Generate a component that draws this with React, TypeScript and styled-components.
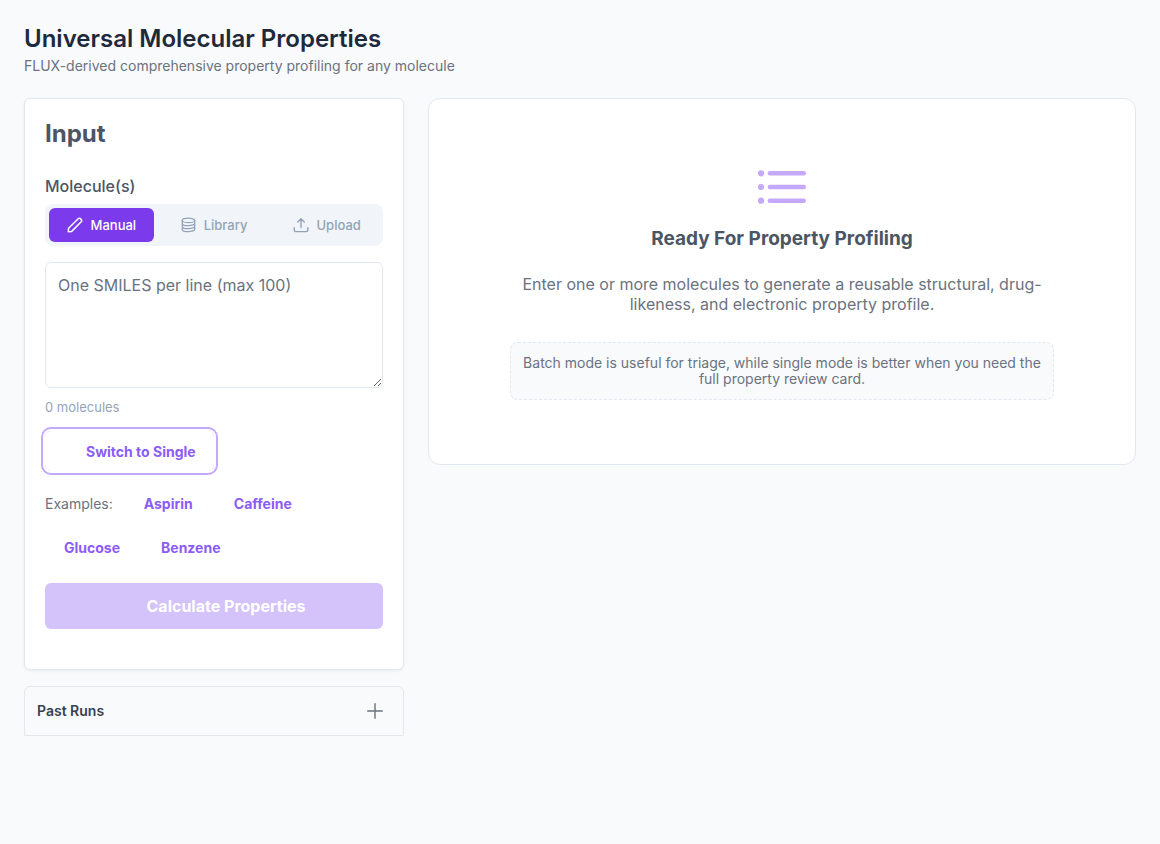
import React, { useState } from 'react';
import styled, { createGlobalStyle } from 'styled-components';

const GlobalStyle = createGlobalStyle`
  *, *::before, *::after { box-sizing: border-box; }
  body {
    margin: 0;
    background: #f8fafc;
    color: #495057;
    font-family: Inter, "Liberation Sans", sans-serif;
    font-size: 16px;
  }
  button, textarea { font-family: inherit; }
`;

const Page = styled.main`
  min-height: 100vh;
  padding: 24px;
`;

const PageHeader = styled.header`
  margin-bottom: 23px;
`;

const PageTitle = styled.h1`
  margin: 0 0 3px;
  color: #1e293b;
  font-size: 24px;
  font-weight: 600;
  line-height: 30px;
`;

const Subtitle = styled.p`
  margin: 0;
  color: #6b7280;
  font-size: 14px;
  line-height: 18px;
`;

const Columns = styled.div`
  display: grid;
  grid-template-columns: 380px minmax(0, 1fr);
  align-items: start;
  gap: 24px;
`;

const Sidebar = styled.div`
  display: flex;
  flex-direction: column;
  gap: 16px;
`;

const InputCard = styled.form`
  display: flex;
  flex-direction: column;
  padding: 20px 20px 40px;
  border: 1px solid #e2e8f0;
  border-radius: 6px;
  background: #fff;
  box-shadow: 0 1px 3px rgba(0, 0, 0, 0.06);
`;

const CardTitle = styled.h2`
  margin: 0 0 28px;
  color: #4b5563;
  font-size: 24px;
  font-weight: 700;
  line-height: 29px;
`;

const FieldLabel = styled.label`
  margin-bottom: 8px;
  color: #4b5563;
  font-weight: 500;
  line-height: 20px;
`;

const Tabs = styled.div`
  display: flex;
  gap: 8px;
  margin-bottom: 16px;
  padding: 4px;
  border-radius: 8px;
  background: #f1f5f9;
`;

const Tab = styled.button<{ $active: boolean }>`
  display: flex;
  flex: 1 1 0;
  align-items: center;
  justify-content: center;
  gap: 8px;
  height: 34px;
  padding: 0;
  border: 0;
  border-radius: 6px;
  background: ${({ $active }) => ($active ? '#7c3aed' : 'transparent')};
  color: ${({ $active }) => ($active ? '#fff' : '#94a3b8')};
  font-size: 13px;
  font-weight: 500;
  cursor: pointer;
`;

const MoleculeInput = styled.textarea`
  display: block;
  width: 100%;
  height: 126px;
  margin-bottom: 11px;
  padding: 12px;
  border: 1px solid #e2e8f0;
  border-radius: 6px;
  background: #fff;
  color: #4b5563;
  font-size: 16px;
  line-height: 20px;
  resize: vertical;
  &::placeholder { color: #6b7280; }
`;

const Counter = styled.div`
  margin-bottom: 16px;
  color: #94a3b8;
  font-size: 13px;
  line-height: 16px;
`;

const TextButton = styled.button<{ $ringed?: boolean; $iconSlot?: boolean }>`
  align-self: flex-start;
  height: 40px;
  padding: 0 18px 0 ${({ $iconSlot }) => ($iconSlot ? '41px' : '19px')};
  border: 0;
  border-radius: 6px;
  background: transparent;
  color: #8b5cf6;
  font-size: 14px;
  font-weight: 700;
  line-height: 17px;
  cursor: pointer;
  box-shadow: ${({ $ringed }) => ($ringed ? '0 0 0 2px #fff, 0 0 0 4px #c4a8fa' : 'none')};
`;

const Examples = styled.div`
  display: flex;
  flex-wrap: wrap;
  align-items: center;
  gap: 4px;
  margin: 12px 0 16px;
`;

const ExamplesLabel = styled.span`
  margin-right: 8px;
  color: #6b7280;
  font-size: 14px;
`;

const SubmitButton = styled.button`
  height: 46px;
  padding: 0 20px 0 44px;
  border: 0;
  border-radius: 6px;
  background: #d4c2fb;
  color: #fff;
  font-size: 16px;
  font-weight: 700;
`;

const PastRuns = styled.button`
  display: flex;
  align-items: center;
  justify-content: space-between;
  height: 50px;
  padding: 0 20px 0 12px;
  border: 1px solid #e5e7eb;
  border-radius: 6px 6px 0 0;
  background: #f9fafb;
  color: #374151;
  font-size: 14px;
  font-weight: 600;
  line-height: 16px;
  cursor: pointer;
`;

const ResultPanel = styled.section`
  display: flex;
  flex-direction: column;
  align-items: center;
  padding: 64px 24px;
  border: 1px solid #e2e8f0;
  border-radius: 12px;
  background: #fff;
  text-align: center;
`;

const PanelTitle = styled.h3`
  margin: 16px 0 24px;
  color: #4b5563;
  font-size: 19px;
  font-weight: 700;
  line-height: 23px;
`;

const PanelText = styled.p`
  max-width: 544px;
  margin: 0 0 28px;
  color: #6b7280;
  line-height: 20px;
`;

const Hint = styled.p`
  max-width: 544px;
  margin: 0;
  padding: 12px;
  border: 1px dashed #e2e8f0;
  border-radius: 8px;
  background: #f8fafc;
  color: #6b7280;
  font-size: 14px;
  line-height: 16px;
`;

const StrokeIcon = styled.svg`
  flex: none;
  fill: none;
  stroke: currentColor;
  stroke-linecap: round;
  stroke-linejoin: round;
`;

const PencilIcon = () => (
  <StrokeIcon width="16" height="16" viewBox="0 0 16 16" strokeWidth="1.5" aria-hidden="true">
    <path d="M1.3 14.7l.3-3.4L11.2 1.8a1.6 1.6 0 0 1 2.3 0l.7.7a1.6 1.6 0 0 1 0 2.3l-9.5 9.6z" />
  </StrokeIcon>
);

const DatabaseIcon = () => (
  <StrokeIcon width="15" height="16" viewBox="0 0 15 16" strokeWidth="1.3" aria-hidden="true">
    <ellipse cx="7.5" cy="3.4" rx="6.2" ry="2.2" />
    <path d="M1.3 3.4v9c0 1.2 2.8 2.2 6.2 2.2s6.2-1 6.2-2.2v-9M1.3 6.4c0 1.2 2.8 2.2 6.2 2.2s6.2-1 6.2-2.2M1.3 9.4c0 1.2 2.8 2.2 6.2 2.2s6.2-1 6.2-2.2" />
  </StrokeIcon>
);

const UploadIcon = () => (
  <StrokeIcon width="16" height="16" viewBox="0 0 16 16" strokeWidth="1.4" aria-hidden="true">
    <path d="M8 10.5V1.7M4.7 5L8 1.7 11.3 5M1.2 10.7v2.4c0 .9.6 1.5 1.5 1.5h10.6c.9 0 1.5-.6 1.5-1.5v-2.4" />
  </StrokeIcon>
);

const PlusIcon = () => (
  <StrokeIcon width="16" height="16" viewBox="0 0 16 16" strokeWidth="1.4" color="#6b7280" aria-hidden="true">
    <path d="M8 .7v14.6M.7 8h14.6" />
  </StrokeIcon>
);

const ListIcon = () => (
  <svg width="48" height="48" viewBox="0 0 48 48" fill="#c4a8fa" aria-hidden="true">
    {[10.3, 24, 37.7].map((y) => (
      <g key={y}>
        <circle cx="3.1" cy={y} r="3.1" />
        <rect x="9.6" y={y - 2.3} width="38.4" height="4.6" rx="2.3" />
      </g>
    ))}
  </svg>
);

const sources = [
  { name: 'Manual', Icon: PencilIcon },
  { name: 'Library', Icon: DatabaseIcon },
  { name: 'Upload', Icon: UploadIcon },
];

const examples = [
  { name: 'Aspirin', smiles: 'CC(=O)Oc1ccccc1C(=O)O' },
  { name: 'Caffeine', smiles: 'CN1C=NC2=C1C(=O)N(C(=O)N2C)C' },
  { name: 'Glucose', smiles: 'OCC1OC(O)C(O)C(O)C1O' },
  { name: 'Benzene', smiles: 'c1ccccc1' },
];

export default function App() {
  const [source, setSource] = useState('Manual');
  const [text, setText] = useState('');
  const count = text.split('\n').filter((line) => line.trim()).length;

  return (
    <>
      <GlobalStyle />
      <Page>
        <PageHeader>
          <PageTitle>Universal Molecular Properties</PageTitle>
          <Subtitle>FLUX-derived comprehensive property profiling for any molecule</Subtitle>
        </PageHeader>
        <Columns>
          <Sidebar>
            <InputCard onSubmit={(e) => e.preventDefault()}>
              <CardTitle>Input</CardTitle>
              <FieldLabel htmlFor="molecules">Molecule(s)</FieldLabel>
              <Tabs>
                {sources.map(({ name, Icon }) => (
                  <Tab
                    key={name}
                    type="button"
                    $active={source === name}
                    aria-pressed={source === name}
                    onClick={() => setSource(name)}
                  >
                    <Icon />
                    {name}
                  </Tab>
                ))}
              </Tabs>
              <MoleculeInput
                id="molecules"
                placeholder="One SMILES per line (max 100)"
                value={text}
                onChange={(e) => setText(e.target.value)}
              />
              <Counter>{`${count} molecules`}</Counter>
              <TextButton type="button" $ringed $iconSlot>Switch to Single</TextButton>
              <Examples>
                <ExamplesLabel>Examples:</ExamplesLabel>
                {examples.map(({ name, smiles }) => (
                  <TextButton key={name} type="button" onClick={() => setText(smiles)}>
                    {name}
                  </TextButton>
                ))}
              </Examples>
              <SubmitButton type="submit" disabled={count === 0}>Calculate Properties</SubmitButton>
            </InputCard>
            <PastRuns type="button" aria-expanded={false}>
              Past Runs
              <PlusIcon />
            </PastRuns>
          </Sidebar>
          <ResultPanel>
            <ListIcon />
            <PanelTitle>Ready For Property Profiling</PanelTitle>
            <PanelText>
              Enter one or more molecules to generate a reusable structural, drug-likeness, and
              electronic property profile.
            </PanelText>
            <Hint>
              Batch mode is useful for triage, while single mode is better when you need the full
              property review card.
            </Hint>
          </ResultPanel>
        </Columns>
      </Page>
    </>
  );
}
